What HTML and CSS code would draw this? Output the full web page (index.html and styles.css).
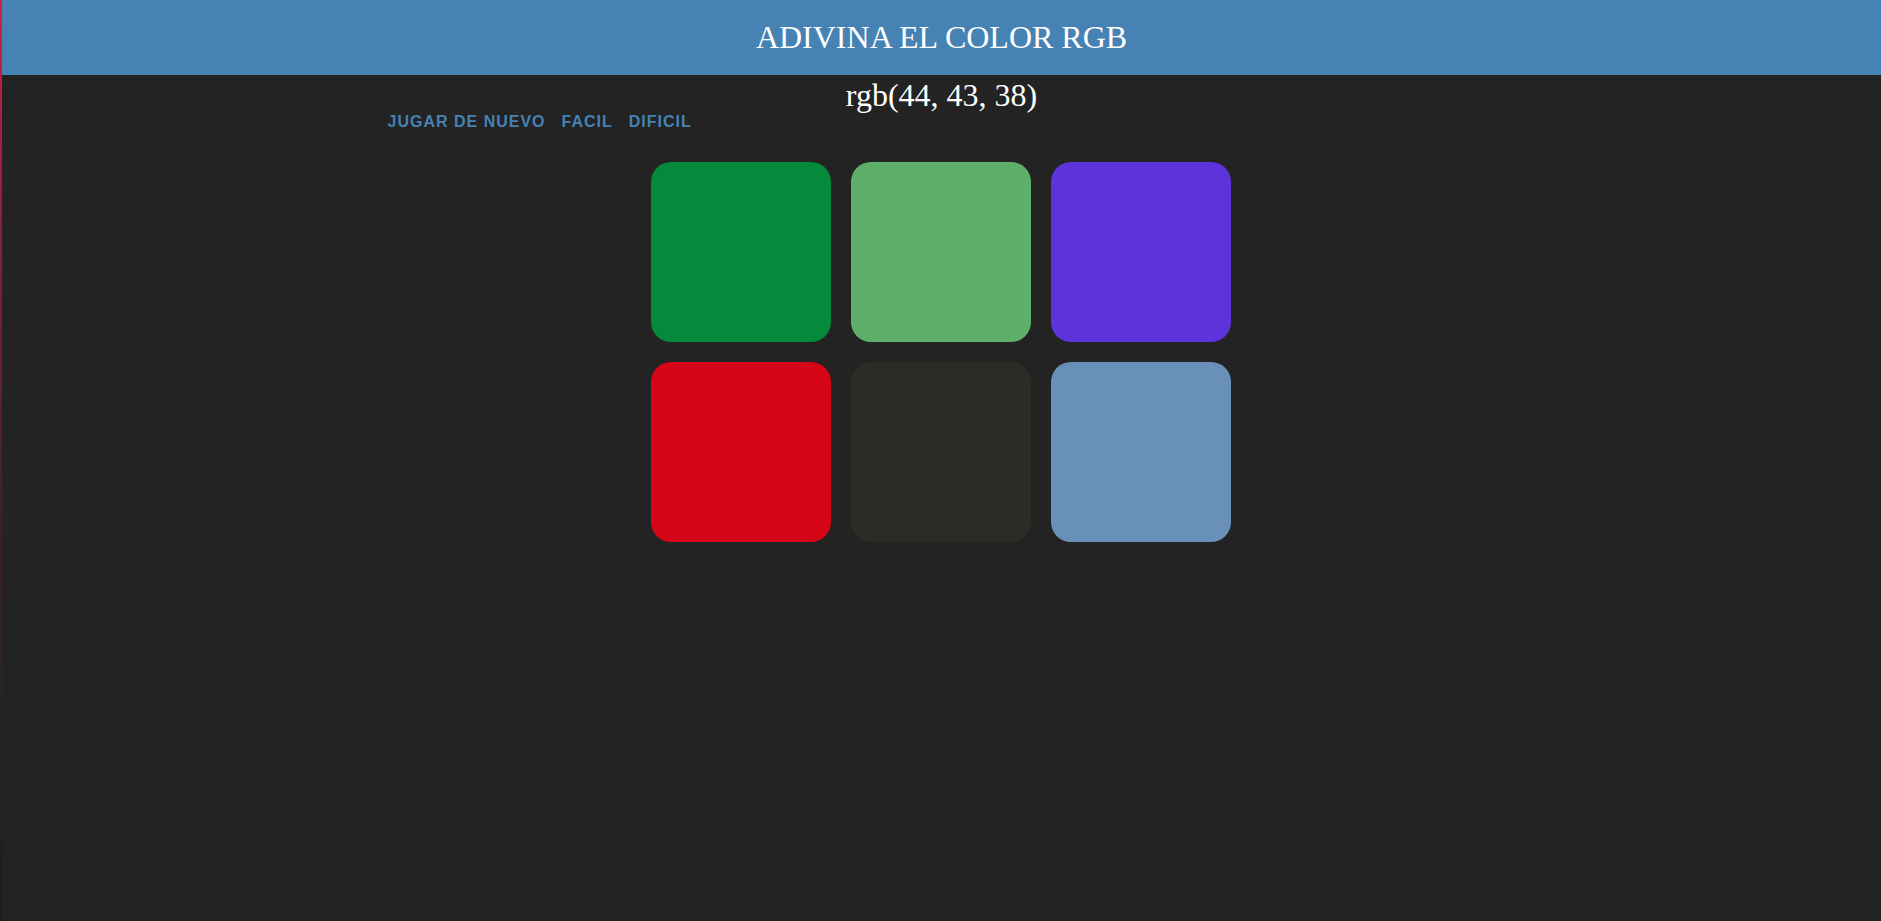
FILE: index.html
```html
<!DOCTYPE html>
<html lang="es">
<head>
<meta charset="utf-8">
<title>Adivina el color RGB</title>
<link rel="stylesheet" href="styles.css">
</head>
<body>
<div class="page">
  <header class="header">
    <h1 class="title">ADIVINA EL COLOR RGB</h1>
  </header>
  <div class="target">rgb(44, 43, 38)</div>
  <nav class="controls">
    <button class="ctrl">JUGAR DE NUEVO</button>
    <button class="ctrl">FACIL</button>
    <button class="ctrl">DIFICIL</button>
  </nav>
  <main class="board">
    <div class="square sq-green"></div>
    <div class="square sq-lightgreen"></div>
    <div class="square sq-purple"></div>
    <div class="square sq-red"></div>
    <div class="square sq-dark"></div>
    <div class="square sq-blue"></div>
  </main>
</div>
</body>
</html>
```

FILE: styles.css
```css
html, body {
  margin: 0;
  padding: 0;
  height: 100%;
}

body {
  background: #232323;
  font-family: "Liberation Serif", "Times New Roman", serif;
}

.page {
  position: relative;
  min-height: 100%;
}

.page::before {
  content: "";
  position: absolute;
  left: 0;
  top: 0;
  bottom: 0;
  width: 2px;
  background: linear-gradient(to bottom, #d11f48 0%, #8a2038 25%, #40202a 55%, #262224 85%, #1c1c1e 100%);
}

.header {
  background: #4682b4;
  height: 75px;
  box-sizing: border-box;
  padding-top: 19px;
  padding-left: 2px;
}

.title {
  margin: 0;
  font-weight: normal;
  font-size: 32px;
  line-height: 37px;
  color: #ffffff;
  text-align: center;
}

.target {
  height: 38px;
  box-sizing: border-box;
  padding-top: 2px;
  padding-left: 2px;
  font-size: 32px;
  line-height: 36px;
  color: #ffffff;
  text-align: center;
}

.controls {
  width: 1106px;
  margin: 0 auto;
  display: flex;
  gap: 16px;
  height: 18px;
}

.ctrl {
  background: none;
  border: none;
  padding: 0;
  margin: 0;
  font-family: "Liberation Sans", Arial, sans-serif;
  font-weight: bold;
  font-size: 16px;
  line-height: 18px;
  letter-spacing: 1px;
  color: #4682b4;
  cursor: pointer;
}

.board {
  width: 580px;
  margin: 31px auto 0;
  display: grid;
  grid-template-columns: repeat(3, 180px);
  grid-auto-rows: 180px;
  gap: 20px;
}

.square {
  border-radius: 20px;
}

.sq-green { background: #05893b; }
.sq-lightgreen { background: #5eaf6a; }
.sq-purple { background: #5d33dc; }
.sq-red { background: #d50416; }
.sq-dark { background: rgb(44, 43, 38); }
.sq-blue { background: #6990b8; }
```
